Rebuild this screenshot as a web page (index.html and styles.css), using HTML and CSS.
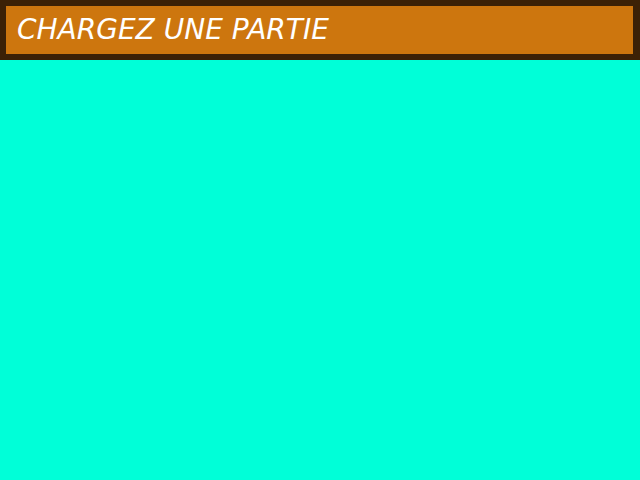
FILE: index.html
```html
<!DOCTYPE html>
<html lang="fr">
<head>
<meta charset="utf-8">
<title>Chargez une partie</title>
<link rel="stylesheet" href="styles.css">
</head>
<body>
<header class="bar">
  <div class="bar-inner">
    <h1 class="title">CHARGEZ UNE PARTIE</h1>
  </div>
</header>
<main class="content"></main>
</body>
</html>
```
FILE: styles.css
```css
html, body {
  margin: 0;
  padding: 0;
  height: 100%;
}
body {
  background: #00ffd8;
  font-family: "DejaVu Sans", sans-serif;
}
.bar {
  background: #3c2106;
  padding: 6px 7px 6px 6px;
}
.bar-inner {
  background: #cd760e;
  height: 48px;
  display: flex;
  align-items: center;
  padding-left: 11px;
}
.title {
  margin: 0;
  color: #ffffff;
  font-size: 28px;
  font-style: italic;
  font-weight: normal;
  line-height: 1;
}
```
